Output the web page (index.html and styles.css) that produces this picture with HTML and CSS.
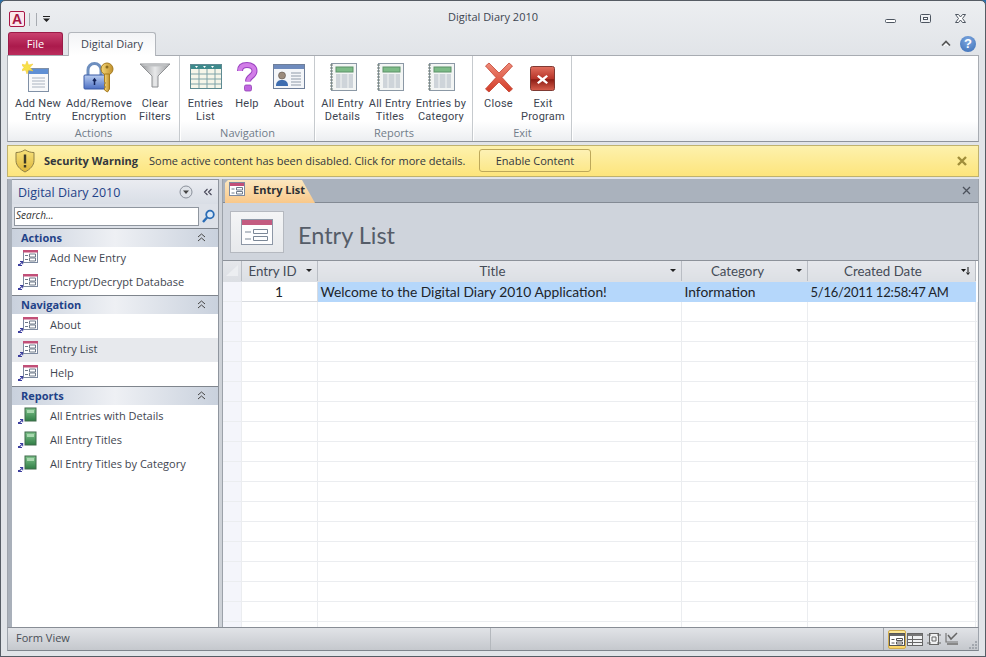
FILE: index.html
```html
<!DOCTYPE html>
<html lang="en">
<head>
<meta charset="utf-8">
<title>Digital Diary 2010</title>
<link rel="stylesheet" href="styles.css">
</head>
<body>
<svg class="defs" width="0" height="0" aria-hidden="true">
  <defs>
    <linearGradient id="gGreen" x1="0" y1="0" x2="0" y2="1"><stop offset="0" stop-color="#7fc48c"/><stop offset="1" stop-color="#2f7d45"/></linearGradient>
    <linearGradient id="gSilver" x1="0" y1="0" x2="1" y2="0"><stop offset="0" stop-color="#8d8f92"/><stop offset=".5" stop-color="#e8e9ea"/><stop offset="1" stop-color="#9a9c9f"/></linearGradient>
    <linearGradient id="gBlue" x1="0" y1="0" x2="0" y2="1"><stop offset="0" stop-color="#b9cdf0"/><stop offset="1" stop-color="#4c6fc4"/></linearGradient>
    <linearGradient id="gGold" x1="0" y1="0" x2="1" y2="0"><stop offset="0" stop-color="#f5d778"/><stop offset="1" stop-color="#c0902c"/></linearGradient>
    <linearGradient id="gRed" x1="0" y1="0" x2="0" y2="1"><stop offset="0" stop-color="#ef8a78"/><stop offset="1" stop-color="#d23c28"/></linearGradient>
    <linearGradient id="gExit" x1="0" y1="0" x2="0" y2="1"><stop offset="0" stop-color="#e2705f"/><stop offset=".5" stop-color="#b8352a"/><stop offset=".55" stop-color="#8d1d14"/><stop offset="1" stop-color="#d9604e"/></linearGradient>
    <linearGradient id="gShield" x1="0" y1="0" x2="0" y2="1"><stop offset="0" stop-color="#f8e27a"/><stop offset="1" stop-color="#dcb53a"/></linearGradient>
    <symbol id="formNav" viewBox="0 0 20 18">
      <path d="M0 15h1.500l2-2H2v-1h3.200v3.200h-1v-1.400L2.200 16H4v1H0z" fill="#3b3d9e"/>
      <rect x="5.500" y="1.500" width="14" height="12" fill="#fff" stroke="#7d8aa0"/>
      <rect x="5" y="1" width="15" height="2.500" fill="#c24f78"/>
      <path d="M7 6.500h3M7 10.500h3" stroke="#6f7a8a"/>
      <path d="M11.500 5h6v3h-6zM11.500 9h6v3h-6z" fill="none" stroke="#6f7a8a"/>
    </symbol>
    <symbol id="repNav" viewBox="0 0 20 18">
      <path d="M0 15h1.500l2-2H2v-1h3.200v3.200h-1v-1.400L2.200 16H4v1H0z" fill="#3b3d9e"/>
      <rect x="7" y="1" width="11" height="13" fill="url(#gGreen)" stroke="#3f6a4b"/>
      <rect x="9" y="3" width="7" height="3" fill="#a9d8af"/>
    </symbol>
    <symbol id="report" viewBox="0 0 28 29">
      <rect x="2.500" y=".5" width="25" height="27" fill="#f3f5f4" stroke="#8b98a5"/>
      <path d="M1 2h3M1 5h3M1 8h3M1 11h3M1 14h3M1 17h3M1 20h3M1 23h3M1 26h3" stroke="#6d7b70" stroke-width="1.200"/>
      <rect x="7" y="4" width="17" height="5" fill="#7dbb87" stroke="#5d9268"/>
      <path d="M7 12h17M7 14h17M7 16h17M7 18h17M7 20h17M7 22h17M7 24h17" stroke="#a9b3bf"/>
      <path d="M12 11v14M19 11v14" stroke="#f3f5f4"/>
    </symbol>
  </defs>
</svg>

<div class="window">
  <header class="titlebar">
    <div class="qat">
      <span class="applogo">A</span>
      <span class="qat-sep"></span>
      <span class="qat-sep"></span>
      <svg class="qat-arrow" width="7" height="7" viewBox="0 0 7 7"><path d="M0 0h7v1H0zM0 2.500h7L3.500 6z" fill="#222"/></svg>
    </div>
    <div class="apptitle">Digital Diary 2010</div>
    <div class="winctl">
      <svg width="12" height="10" viewBox="0 0 12 10"><rect x=".5" y="5.500" width="10" height="3" rx="1" fill="#fff" stroke="#4d5560"/></svg>
      <svg width="12" height="10" viewBox="0 0 12 10"><rect x=".5" y=".5" width="10" height="8" rx="1" fill="#eef0f3" stroke="#4d5560"/><rect x="3.500" y="3.500" width="4" height="2" fill="#fff" stroke="#4d5560"/></svg>
      <svg width="12" height="10" viewBox="0 0 12 10"><path d="M.5.500h3L5.500 3l2-2.500h3L7.500 4.500l3 4h-3l-2-2.500-2 2.500h-3l3-4z" fill="#fff" stroke="#4d5560"/></svg>
    </div>
  </header>

  <nav class="tabrow">
    <div class="tab-file">File</div>
    <div class="tab-home">Digital Diary</div>
    <div class="tab-tools">
      <svg width="10" height="7" viewBox="0 0 10 7"><path d="M1 5.500 5 1.500l4 4" fill="none" stroke="#555" stroke-width="1.600"/><path d="M3 6 5 4l2 2" fill="none" stroke="#fff"/></svg>
      <span class="helpdot">?</span>
    </div>
  </nav>

  <section class="ribbon">
    <div class="group g-actions">
      <div class="btns">
        <div class="rbtn"><svg width="32" height="32" viewBox="0 0 32 32"><rect x="6.500" y="7.500" width="20" height="23" fill="#f8f9fb" stroke="#8090a6"/><rect x="7" y="8" width="19" height="5" fill="#5f8fd4"/><path d="M10 17h13M10 20h13M10 23h13M10 26h13" stroke="#aab3c0"/><path d="M5 0l1.500 4L11 3 8 6.500 11 10 6.500 9 5 13 3.500 9-1 10 2 6.500-1 3l4.500 1z" fill="#f7e14a" stroke="#f4c430" stroke-width=".5"/></svg><span>Add New<br>Entry</span></div>
        <div class="rbtn"><svg width="32" height="32" viewBox="0 0 32 32"><path d="M5 15V9a6.500 6.500 0 0 1 13 0v6" fill="none" stroke="#6e8fbf" stroke-width="3"/><rect x="1" y="14" width="21" height="14" rx="1" fill="url(#gBlue)" stroke="#3a5aa5"/><path d="M11.500 18v6M10 20l1.500-2 1.500 2" stroke="#13235a" stroke-width="1.500" fill="none"/><circle cx="24" cy="8" r="6" fill="url(#gGold)" stroke="#a57a1f"/><circle cx="24" cy="6" r="1.500" fill="#8a6a1c"/><path d="M21.500 13h5v15l-2 3-3-2v-2l1-1-1-1v-2l1-1-1-1z" fill="url(#gGold)" stroke="#a57a1f"/></svg><span>Add/Remove<br>Encryption</span></div>
        <div class="rbtn"><svg width="32" height="32" viewBox="0 0 32 32"><path d="M1 3h30L19 15v11h-6V15z" fill="url(#gSilver)" stroke="#8f9194"/><ellipse cx="16" cy="4" rx="14" ry="1.500" fill="#bfc1c3"/></svg><span>Clear<br>Filters</span></div>
      </div>
      <div class="glabel">Actions</div>
    </div>
    <div class="group g-nav">
      <div class="btns">
        <div class="rbtn"><svg width="32" height="32" viewBox="0 0 32 32"><rect x=".5" y="3.500" width="31" height="24" fill="#f6f5e9" stroke="#5e8a92"/><rect x="1" y="4" width="30" height="4" fill="#3e8a8c"/><path d="M1 13h30M1 18h30M1 23h30M9 8v19M17 8v19M25 8v19" stroke="#7fa3a8"/><path d="M5 5l3 0-1.500 2zM13 5h3l-1.500 2zM21 5h3l-1.500 2z" fill="#fff"/></svg><span>Entries<br>List</span></div>
        <div class="rbtn"><svg width="24" height="32" viewBox="0 0 24 32"><path d="M5 10C5 5.500 8 4 12 4s7.500 2 7.500 6c0 5.500-6.500 5-6.500 10.500" fill="none" stroke="#9a44c0" stroke-width="6"/><path d="M5 10C5 5.500 8 4 12 4s7.500 2 7.500 6c0 5.500-6.500 5-6.500 10.500" fill="none" stroke="#d27de8" stroke-width="4"/><rect x="9.500" y="24" width="7" height="6" rx="1.500" fill="#c166e0" stroke="#8f3fb2" stroke-width=".8"/></svg><span>Help</span></div>
        <div class="rbtn"><svg width="32" height="32" viewBox="0 0 32 32"><rect x=".5" y="3.500" width="31" height="24" fill="#f4f6f9" stroke="#6f7f99"/><rect x="1" y="4" width="30" height="4" fill="#6f8bbd"/><circle cx="9" cy="14.500" r="3.500" fill="#9b8b7c" stroke="#5c5048" stroke-width=".6"/><path d="M3 25c0-5 3-6 6-6s6 1 6 6z" fill="#3e6db0"/><path d="M18 12h10M18 15h10M18 18h10M18 21h10M18 24h10" stroke="#8f9aa8"/></svg><span>About</span></div>
      </div>
      <div class="glabel">Navigation</div>
    </div>
    <div class="group g-reports">
      <div class="btns">
        <div class="rbtn"><svg width="28" height="32"><use href="#report" width="28" height="29" y="2"/></svg><span>All Entry<br>Details</span></div>
        <div class="rbtn"><svg width="28" height="32"><use href="#report" width="28" height="29" y="2"/></svg><span>All Entry<br>Titles</span></div>
        <div class="rbtn"><svg width="28" height="32"><use href="#report" width="28" height="29" y="2"/></svg><span>Entries by<br>Category</span></div>
      </div>
      <div class="glabel">Reports</div>
    </div>
    <div class="group g-exit">
      <div class="btns">
        <div class="rbtn"><svg width="28" height="32" viewBox="0 0 28 32"><path d="M4 2 14 12 24 2l3.500 3L17 16.500 27.500 28 24 31 14 21 4 31 .5 28 11 16.500.5 5z" fill="url(#gRed)" stroke="#c24432" stroke-width=".8"/></svg><span>Close</span></div>
        <div class="rbtn"><svg width="26" height="32" viewBox="0 0 26 32"><rect x=".5" y="5.500" width="24" height="24" rx="2" fill="url(#gExit)" stroke="#7f3a33"/><path d="M8.500 14 12.500 17 16.500 14l1.500 1.500-3.500 3 3.500 3-1.500 1.500-4-3-4 3L7 21.500l3.500-3-3.500-3z" fill="#fff"/></svg><span>Exit<br>Program</span></div>
      </div>
      <div class="glabel">Exit</div>
    </div>
  </section>

  <section class="warnbar">
    <svg class="shield" width="20" height="24" viewBox="0 0 20 24"><path d="M10 .8c3 2 6 2.700 9 2.700v8c0 5-4 9-9 11.500-5-2.500-9-6.500-9-11.500v-8c3 0 6-.7 9-2.700z" fill="url(#gShield)" stroke="#8f8046"/><path d="M10 5.500v9" stroke="#3d3a26" stroke-width="2.400"/><rect x="8.800" y="16" width="2.400" height="2.500" fill="#3d3a26"/></svg>
    <strong class="warn-title">Security Warning</strong>
    <span class="warn-msg">Some active content has been disabled. Click for more details.</span>
    <span class="warn-btn">Enable Content</span>
    <svg class="warn-x" width="10" height="10" viewBox="0 0 10 10"><path d="M1 1l8 8M9 1 1 9" stroke="#a08d3a" stroke-width="2.400"/></svg>
  </section>

  <main class="workspace">
    <aside class="navpane">
      <div class="nav-head">
        <span class="nav-title">Digital Diary 2010</span>
        <svg width="14" height="14" viewBox="0 0 14 14"><circle cx="7" cy="7" r="6" fill="#dfe3e9" stroke="#8a909a"/><path d="M4 5.500h6L7 9z" fill="#444"/></svg>
        <svg class="nav-collapse" width="10" height="8" viewBox="0 0 10 8"><path d="M4.500 1 1.500 4l3 3M8.500 1l-3 3 3 3" fill="none" stroke="#445" stroke-width="1.100"/></svg>
      </div>
      <div class="searchrow">
        <span class="searchbox">Search...</span>
        <svg width="15" height="15" viewBox="0 0 15 15"><circle cx="9" cy="5.500" r="3.800" fill="#dbe9f8" stroke="#2a6cb5" stroke-width="1.800"/><path d="M6 8.500 2 13" stroke="#2a6cb5" stroke-width="2.400"/></svg>
      </div>
      <div class="sect first">
        <div class="sect-head"><span>Actions</span><svg width="9" height="9" viewBox="0 0 9 9"><path d="M1 4l3.500-3L8 4M1 8l3.500-3L8 8" fill="none" stroke="#444"/></svg></div>
        <div class="item"><svg width="20" height="18"><use href="#formNav"/></svg><span>Add New Entry</span></div>
        <div class="item"><svg width="20" height="18"><use href="#formNav"/></svg><span>Encrypt/Decrypt Database</span></div>
      </div>
      <div class="sect">
        <div class="sect-head"><span>Navigation</span><svg width="9" height="9" viewBox="0 0 9 9"><path d="M1 4l3.500-3L8 4M1 8l3.500-3L8 8" fill="none" stroke="#444"/></svg></div>
        <div class="item"><svg width="20" height="18"><use href="#formNav"/></svg><span>About</span></div>
        <div class="item on"><svg width="20" height="18"><use href="#formNav"/></svg><span>Entry List</span></div>
        <div class="item"><svg width="20" height="18"><use href="#formNav"/></svg><span>Help</span></div>
      </div>
      <div class="sect">
        <div class="sect-head"><span>Reports</span><svg width="9" height="9" viewBox="0 0 9 9"><path d="M1 4l3.500-3L8 4M1 8l3.500-3L8 8" fill="none" stroke="#444"/></svg></div>
        <div class="item"><svg width="20" height="18"><use href="#repNav"/></svg><span>All Entries with Details</span></div>
        <div class="item"><svg width="20" height="18"><use href="#repNav"/></svg><span>All Entry Titles</span></div>
        <div class="item"><svg width="20" height="18"><use href="#repNav"/></svg><span>All Entry Titles by Category</span></div>
      </div>
    </aside>
    <div class="splitter"></div>
    <section class="docarea">
      <div class="doctabs">
        <div class="doctab">
          <svg width="16" height="14" viewBox="0 0 16 14"><rect x=".5" y=".5" width="15" height="13" fill="#fff" stroke="#7d8aa0"/><rect x="1" y="1" width="14" height="3" fill="#c24f78"/><path d="M2.500 7h3M2.500 11h3" stroke="#6f7a8a"/><path d="M7.500 5.500h6v2.500h-6zM7.500 9.500h6v2.500h-6z" fill="none" stroke="#6f7a8a"/></svg>
          <span>Entry List</span>
        </div>
        <svg class="doc-x" width="9" height="9" viewBox="0 0 9 9"><path d="M1 1l7 7M8 1 1 8" stroke="#4c525c" stroke-width="1.300"/></svg>
      </div>
      <div class="formhead">
        <div class="formicon"><svg width="32" height="26" viewBox="0 0 32 26"><rect x=".5" y=".5" width="31" height="25" fill="#fdfdfe" stroke="#8d97a6"/><rect x="1" y="1" width="30" height="5" fill="#c35a80"/><path d="M4 13h6M4 20h6" stroke="#7b8797"/><path d="M12.500 10.500h14v4h-14zM12.500 17.500h14v4h-14z" fill="none" stroke="#7b8797"/></svg></div>
        <h1>Entry List</h1>
      </div>
      <div class="gridwrap">
        <table class="sheet">
          <colgroup><col class="c0"><col class="c1"><col class="c2"><col class="c3"><col class="c4"><col></colgroup>
          <thead>
            <tr>
              <th class="corner"><svg width="14" height="13" viewBox="0 0 14 13"><path d="M13 1v11H1z" fill="#eceef1"/></svg></th>
              <th><span class="thbox"><span class="thtext">Entry ID</span><i class="drop"></i></span></th>
              <th><span class="thbox"><span class="thtext">Title</span><i class="drop"></i></span></th>
              <th><span class="thbox"><span class="thtext">Category</span><i class="drop"></i></span></th>
              <th><span class="thbox"><span class="thtext">Created Date</span><svg class="sortic" width="9" height="8" viewBox="0 0 9 8"><path d="M0 2h5L2.500 5z" fill="#111"/><path d="M7 0v7M5.500 5.500 7 7.500l1.500-2" stroke="#111" fill="none"/></svg></span></th>
              <th class="endcol"></th>
            </tr>
          </thead>
          <tbody>
            <tr class="sel"><td class="rowsel"></td><td class="idcell">1</td><td>Welcome to the Digital Diary 2010 Application!</td><td>Information</td><td class="datecell">5/16/2011 12:58:47 AM</td><td class="endcol"></td></tr>
            <tr><td class="rowsel"></td><td></td><td></td><td></td><td></td><td class="endcol"></td></tr>
            <tr><td class="rowsel"></td><td></td><td></td><td></td><td></td><td class="endcol"></td></tr>
            <tr><td class="rowsel"></td><td></td><td></td><td></td><td></td><td class="endcol"></td></tr>
            <tr><td class="rowsel"></td><td></td><td></td><td></td><td></td><td class="endcol"></td></tr>
            <tr><td class="rowsel"></td><td></td><td></td><td></td><td></td><td class="endcol"></td></tr>
            <tr><td class="rowsel"></td><td></td><td></td><td></td><td></td><td class="endcol"></td></tr>
            <tr><td class="rowsel"></td><td></td><td></td><td></td><td></td><td class="endcol"></td></tr>
            <tr><td class="rowsel"></td><td></td><td></td><td></td><td></td><td class="endcol"></td></tr>
            <tr><td class="rowsel"></td><td></td><td></td><td></td><td></td><td class="endcol"></td></tr>
            <tr><td class="rowsel"></td><td></td><td></td><td></td><td></td><td class="endcol"></td></tr>
            <tr><td class="rowsel"></td><td></td><td></td><td></td><td></td><td class="endcol"></td></tr>
            <tr><td class="rowsel"></td><td></td><td></td><td></td><td></td><td class="endcol"></td></tr>
            <tr><td class="rowsel"></td><td></td><td></td><td></td><td></td><td class="endcol"></td></tr>
            <tr><td class="rowsel"></td><td></td><td></td><td></td><td></td><td class="endcol"></td></tr>
            <tr><td class="rowsel"></td><td></td><td></td><td></td><td></td><td class="endcol"></td></tr>
            <tr><td class="rowsel"></td><td></td><td></td><td></td><td></td><td class="endcol"></td></tr>
            <tr><td class="rowsel"></td><td></td><td></td><td></td><td></td><td class="endcol"></td></tr>
          </tbody>
        </table>
      </div>
    </section>
  </main>

  <footer class="statusbar">
    <span class="status-text">Form View</span>
    <div class="viewbtns">
      <span class="vbtn on"><svg width="16" height="13" viewBox="0 0 16 13"><rect x=".5" y=".5" width="15" height="12" fill="#fff" stroke="#555"/><rect x="1" y="1" width="14" height="2" fill="#666"/><path d="M2.500 6.500h3M2.500 10h3" stroke="#555"/><path d="M7.500 5.500h6v2h-6zM7.500 9h6v2h-6z" fill="none" stroke="#555"/></svg></span>
      <span class="vbtn"><svg width="16" height="13" viewBox="0 0 16 13"><rect x=".5" y=".5" width="15" height="12" fill="#f0f1f2" stroke="#666"/><rect x="1" y="1" width="14" height="2" fill="#777"/><path d="M5.500 3v9M1 6.500h14M1 9.500h14M7.500 6.500" stroke="#666"/></svg></span>
      <span class="vbtn"><svg width="14" height="14" viewBox="0 0 14 14"><rect x="2.500" y="1.500" width="9" height="11" fill="#f0f1f2" stroke="#666"/><path d="M0 3h4M0 11h4M10 3h4M10 11h4M5 5h4v4H5z" fill="none" stroke="#666"/></svg></span>
      <span class="vbtn"><svg width="14" height="14" viewBox="0 0 14 14"><path d="M1 1v9h12" fill="none" stroke="#777" stroke-width="1.200"/><path d="M3 3l3 4 6-6" fill="none" stroke="#666" stroke-width="1.500"/><path d="M2 11h11v2H2z" fill="#888"/></svg></span>
    </div>
    <svg class="grip" width="9" height="9" viewBox="0 0 9 9"><path d="M7 1h2v2H7zM4 4h2v2H4zM7 4h2v2H7zM1 7h2v2H1zM4 7h2v2H4zM7 7h2v2H7z" fill="#a2a7ae"/></svg>
  </footer>
</div>
</body>
</html>
```

FILE: styles.css
```css
* { box-sizing: border-box; }
html, body { margin: 0; padding: 0; height: 100%; background: #2a6fa8; }
body { font-family: "Open Sans", "Liberation Sans", sans-serif; font-size: 11px; color: #3c4450; overflow: hidden; }
.defs { position: absolute; }

.window {
  width: 986px; height: 657px;
  display: flex; flex-direction: column;
  padding: 0 6px 5px;
  background: linear-gradient(#eceef1, #e1e4e8 55px);
  border: 1px solid #565c64;
  border-radius: 5px 5px 0 0;
}

/* title bar */
.titlebar { height: 31px; flex: none; display: grid; grid-template-columns: 1fr auto 1fr; align-items: start; }
.qat { display: flex; align-items: center; gap: 3px; padding: 10px 0 0 2px; }
.applogo {
  width: 16px; height: 16px; display: block; text-align: center;
  font: 700 14px/15px "Liberation Sans", sans-serif; color: #a81645;
  background: #fbe6ec; border: 1px solid #a81645; border-radius: 2px;
  margin-right: 1px;
}
.qat-sep { width: 1px; height: 13px; background: #a7abb1; margin-right: 3px; }
.apptitle { line-height: 15px; padding-top: 8px; color: #3e4651; }
.winctl { display: flex; justify-content: flex-end; gap: 23px; padding: 13px 12px 0 0; }

/* tabs */
.tabrow { height: 23px; flex: none; display: flex; align-items: flex-end; padding-left: 1px; position: relative; z-index: 1; }
.tab-file {
  width: 55px; height: 23px; margin-right: 5px; text-align: center;
  line-height: 22px; color: #fff;
  background: linear-gradient(#c9416f, #ab1a4c 60%, #bb2c5c);
  border: 1px solid #9b1b48; border-bottom: 0; border-radius: 3px 3px 0 0;
}
.tab-home {
  width: 88px; height: 24px; margin-bottom: -1px; text-align: center;
  line-height: 22px; color: #3c4450;
  background: linear-gradient(#f3f4f6, #fff);
  border: 1px solid #b2b6bc; border-bottom: 0; border-radius: 3px 3px 0 0;
}
.tab-tools { margin-left: auto; height: 23px; display: flex; align-items: center; gap: 9px; padding-right: 3px; }
.helpdot {
  width: 16px; height: 16px; border-radius: 50%; text-align: center;
  font: 700 13px/16px "Liberation Sans", sans-serif; color: #fff;
  background: radial-gradient(circle at 50% 30%, #7ea8e0, #3a6db5);
}

/* ribbon */
.ribbon {
  height: 87px; flex: none; display: flex;
  background: linear-gradient(#fff 0, #fff 65px, #eceef1);
  border: 1px solid #a8acb2; border-bottom-color: #8e939b;
}
.group { flex: none; display: flex; flex-direction: column; border-right: 1px solid #c6cace; box-shadow: 1px 0 0 #fff; margin-right: 1px; }
.btns { flex: 1; min-height: 0; display: grid; }
.g-actions { width: 172px; }
.g-actions .btns { grid-template-columns: 56px 66px 46px; padding-left: 2px; }
.g-nav { width: 134px; }
.g-nav .btns { grid-template-columns: 49px 34px 50px; }
.g-reports { width: 157px; }
.g-reports .btns { grid-template-columns: 53px 42px 60px; }
.g-exit { width: 98px; }
.g-exit .btns { grid-template-columns: 49px 40px; }
.rbtn {
  display: flex; flex-direction: column; align-items: center; padding-top: 5px;
  font-family: Roboto, "Open Sans", sans-serif; letter-spacing: .25px;
  line-height: 13px; text-align: center; white-space: nowrap;
}
.rbtn svg { display: block; margin-bottom: 4px; }
.glabel { height: 17px; flex: none; line-height: 17px; text-align: center; color: #717c89; }

/* warning */
.warnbar {
  height: 32px; flex: none; margin-top: 3px; padding-bottom: 1px; display: flex; align-items: center;
  background: linear-gradient(#fdf1ad, #fde57c);
  border: 1px solid #bfb26e; color: #33373d;
}
.shield { margin-left: 7px; margin-right: 9px; }
.warn-title { font-weight: 700; width: 105px; white-space: nowrap; }
.warn-msg { width: 330px; white-space: nowrap; }
.warn-btn {
  width: 112px; height: 23px; text-align: center; line-height: 21px;
  background: linear-gradient(#fdf1b4, #fce88a);
  border: 1px solid #bda85a; border-radius: 3px;
}
.warn-x { margin-left: auto; margin-right: 11px; }

/* workspace */
.workspace { flex: 1; min-height: 0; display: flex; margin-top: 2px; background: #a9b0ba; border-left: 1px solid #9ea4ac; border-right: 1px solid #9ea4ac; border-bottom: 1px solid #888d95; }
.navpane {
  width: 206px; flex: none; margin-left: 4px; background: #fff; display: flex; flex-direction: column;
  border-top: 1px solid #8e959f;
}
.splitter { width: 5px; flex: none; background: #ced2d8; border-left: 1px solid #8f959e; border-right: 1px solid #9ca2aa; }
.nav-head {
  height: 24px; flex: none; display: flex; align-items: center; padding: 0 5px 0 6px;
  background: linear-gradient(#eaecf1, #d9dee6);
}
.nav-title { flex: 1; font-size: 12.5px; color: #1f4288; }
.nav-collapse { margin-left: 10px; }
.searchrow {
  height: 24px; flex: none; display: flex; align-items: center; gap: 2px; padding: 0 2px; background: #dde1e8;
}
.searchbox {
  width: 185px; height: 19px; line-height: 15px; padding-left: 1px; background: #fff; border: 1px solid #8f969f;
  font-style: italic; font-size: 10px; color: #333;
}
.sect { border-top: 1px solid #7f858d; }
.sect-head {
  height: 18px; display: flex; align-items: center; justify-content: space-between; padding: 0 12px 2px 9px;
  background: linear-gradient(90deg, #c9d1dd, #eef0f4 50%, #c9d1dd);
  font-size: 11px; font-weight: 700; color: #1f4288;
}
.item { height: 24px; display: flex; align-items: center; padding: 0 0 2px 6px; gap: 12px; color: #3f4650; }
.item span { margin-bottom: 2px; }
.item.on { background: #e7e9ed; }

/* document */
.docarea { flex: 1; min-width: 0; display: flex; flex-direction: column; background: #fff; }
.doctabs {
  height: 24px; flex: none; display: flex; align-items: flex-end; justify-content: space-between;
  background: #aab2bd; border-bottom: 1px solid #838a94;
}
.doctab {
  width: 90px; height: 23px; margin-left: 2px; margin-bottom: -1px; padding: 0 0 5px 4px;
  display: flex; align-items: center; gap: 8px; font-weight: 700; color: #2c2f34;
  background: linear-gradient(#fbe7bf, #f9c88a);
  clip-path: polygon(0 3px, 3px 0, 77px 0, 100% 100%, 0 100%);
}
.doc-x { margin: 0 7px 7px 0; }
.formhead {
  height: 58px; flex: none; display: flex; align-items: flex-start; gap: 14px; padding: 8px 0 0 7px;
  background: #cfd4dc; border-bottom: 1px solid #8d929a;
}
.formicon {
  width: 54px; height: 42px; display: flex; align-items: center; justify-content: center;
  background: linear-gradient(#f4f5f6, #e7e9ec); border: 1px solid #b5b9c0;
}
.formhead h1 { margin: 9px 0 0; font: 400 23.5px/30px Lato, "Open Sans", sans-serif; color: #555c68; }

/* datasheet */
.gridwrap { flex: 1; min-height: 0; overflow: hidden; }
.sheet { width: 100%; table-layout: fixed; border-collapse: collapse; font-family: Lato, "Open Sans", sans-serif; font-size: 13.8px; color: #20242a; }
.c0 { width: 18px; }
.c1 { width: 76px; }
.c2 { width: 364px; }
.c3 { width: 126px; }
.c4 { width: 168px; }
.sheet th, .sheet td { height: 20px; padding: 0; border-right: 1px solid #ebedf0; border-bottom: 1px solid #ebedf0; }
.sheet th { background: linear-gradient(#e5e7eb, #dcdfe4); border-right-color: #b9bdc4; border-bottom-color: #dcdfe4; font-weight: 400; font-size: 13.3px; color: #454c57; }
.thbox { display: flex; align-items: center; padding: 0 5px 0 6px; }
.thtext { flex: 1; text-align: center; padding-right: 8px; }
.drop { width: 0; height: 0; border: 3px solid transparent; border-top: 3px solid #222; border-bottom: 0; }
.sheet .corner { text-align: center; line-height: 0; }
.rowsel { background: #f4f5fb; }
.sel td { background: #b5d7fb; padding-left: 3px; border-right-color: #b5d7fb; border-bottom-color: #b5d7fb; }
.sel td.rowsel { background: #f4f5fb; border-right-color: #ebedf0; border-bottom-color: #ebedf0; }
.sel td.idcell { background: #fff; text-align: center; padding: 0; border-bottom-color: #d8dbe0; border-right-color: #d8dbe0; }
.sel td.datecell { font-size: 13px; letter-spacing: -.25px; padding-top: 1px; }
.sel td.endcol, .endcol, .sheet th.endcol { background: #fff; border-right: 0; border-bottom-color: #fff; }

/* status */
.statusbar {
  height: 23px; flex: none; display: flex; align-items: center;
  padding: 0 1px 0 8px;
  background: linear-gradient(#e1e3e7, #c5c8cd);
  border: 1px solid #9ea4ac; border-top: 0; border-bottom-color: #7e848c; color: #4a4f57;
}
.status-text { width: 475px; height: 22px; line-height: 20px; border-right: 1px solid #b4b8bd; }
.viewbtns { margin-left: auto; display: flex; align-items: center; border-left: 1px solid #a0a4aa; padding-left: 4px; height: 22px; }
.vbtn { width: 18.3px; height: 19px; display: flex; align-items: center; justify-content: center; border-radius: 2px; }
.vbtn.on { background: linear-gradient(#fde998, #fbd567); border: 1px solid #d0ac4e; }
.grip { margin: 11px 0 0 7px; }
```
